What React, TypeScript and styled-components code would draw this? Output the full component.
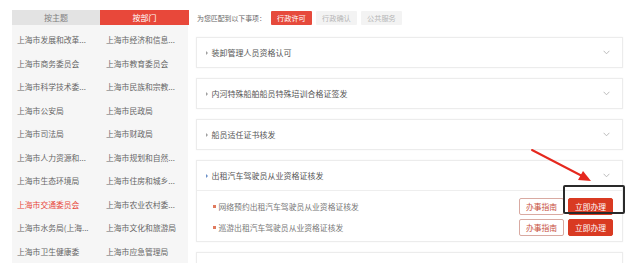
import React from "react";
import styled, { createGlobalStyle } from "styled-components";

const Global = createGlobalStyle`
  html, body { margin: 0; padding: 0; background: #ffffff; }
  body { font-family: "Noto Sans CJK SC", "Noto Sans", sans-serif; }
  * { box-sizing: border-box; }
`;

const Page = styled.div`
  position: relative;
  width: 640px;
  height: 263px;
  overflow: hidden;
  display: flex;
  gap: 7px;
  padding: 10px 0 0 12px;
`;

const Side = styled.div`
  width: 177px;
  display: flex;
  flex-direction: column;
`;

const Tabs = styled.div`
  display: flex;
  height: 26px;
`;

const Tab = styled.div<{ $active?: boolean }>`
  flex: ${(p) => (p.$active ? "0 0 89px" : "0 0 88px")};
  display: flex;
  align-items: center;
  justify-content: center;
  font-size: 8px;
  background: ${(p) => (p.$active ? "#e8483a" : "#e3e3e3")};
  color: ${(p) => (p.$active ? "#ffffff" : "#808080")};
`;

const DeptList = styled.div`
  width: 176px;
  flex: 1;
  background: #f6f6f6;
  display: grid;
  grid-template-columns: 89px 87px;
  grid-auto-rows: 23.5px;
  align-content: start;
  padding: 3px 0 0 5px;
`;

const Dept = styled.div<{ $active?: boolean }>`
  font-size: 7.8px;
  line-height: 23.5px;
  white-space: nowrap;
  color: ${(p) => (p.$active ? "#e8483a" : "#666666")};
`;

const Main = styled.div`
  width: 427px;
  display: flex;
  flex-direction: column;
`;

const Filter = styled.div`
  display: flex;
  align-items: center;
  height: 15px;
  margin-top: 1px;
  margin-bottom: 12px;
  gap: 4px;
`;

const FilterLabel = styled.span`
  font-size: 6.9px;
  color: #666666;
  margin-left: 1px;
  margin-right: 1px;
`;

const Tag = styled.span<{ $active?: boolean }>`
  height: 14px;
  width: 41px;
  display: inline-flex;
  align-items: center;
  justify-content: center;
  font-size: 7.2px;
  border-radius: 1px;
  background: ${(p) => (p.$active ? "#e64a3c" : "#f3f3f3")};
  color: ${(p) => (p.$active ? "#ffffff" : "#b5b5b5")};
`;

const Cards = styled.div`
  display: flex;
  flex-direction: column;
  gap: 10px;
`;

const Card = styled.div`
  border: 1px solid #ececec;
  background: #ffffff;
  box-shadow: 0 0 2px rgba(0, 0, 0, 0.04);
`;

const CardHead = styled.div<{ $open?: boolean }>`
  height: ${(p) => (p.$open ? "30px" : "29px")};
  display: flex;
  align-items: center;
  padding: 0 12px 0 9px;
  border-bottom: ${(p) => (p.$open ? "1px solid #eeeeee" : "none")};
`;

const Marker = styled.span<{ $blue?: boolean }>`
  width: 0;
  height: 0;
  border-top: 2px solid transparent;
  border-bottom: 2px solid transparent;
  border-left: 2.5px solid ${(p) => (p.$blue ? "#6a8fc8" : "#a0a0a0")};
  margin-right: 3.5px;
`;

const CardTitle = styled.span`
  flex: 1;
  font-size: 8px;
  color: #555555;
`;

const Chevron = styled.svg`
  width: 7px;
  height: 5px;
`;

const SubList = styled.div`
  padding: 5px 9px 3px 16px;
  display: flex;
  flex-direction: column;
`;

const SubRow = styled.div`
  height: 21px;
  display: flex;
  align-items: center;
`;

const Dot = styled.span`
  width: 2.5px;
  height: 2.5px;
  background: #e07a5e;
  margin-right: 3px;
`;

const SubText = styled.span`
  flex: 1;
  font-size: 7.8px;
  color: #777777;
`;

const Btn = styled.span<{ $primary?: boolean }>`
  width: 45px;
  height: 17px;
  display: inline-flex;
  align-items: center;
  justify-content: center;
  font-size: 7.8px;
  margin-left: 4px;
  border-radius: 2px;
  background: ${(p) => (p.$primary ? "#d93a22" : "#ffffff")};
  color: ${(p) => (p.$primary ? "#ffffff" : "#c8503e")};
  border: 1px solid ${(p) => (p.$primary ? "#d93a22" : "#d9aaa2")};
`;

const Highlight = styled.div`
  position: absolute;
  left: 563px;
  top: 185px;
  width: 62px;
  height: 29px;
  border: 2px solid #2a2a2a;
  border-radius: 2px;
`;

const Arrow = styled.svg`
  position: absolute;
  left: 528px;
  top: 146px;
  width: 66px;
  height: 38px;
`;

const left = [
  "上海市发展和改革...",
  "上海市商务委员会",
  "上海市科学技术委...",
  "上海市公安局",
  "上海市司法局",
  "上海市人力资源和...",
  "上海市生态环境局",
  "上海市交通委员会",
  "上海市水务局(上海...",
  "上海市卫生健康委",
];
const right = [
  "上海市经济和信息...",
  "上海市教育委员会",
  "上海市民族和宗教...",
  "上海市民政局",
  "上海市财政局",
  "上海市规划和自然...",
  "上海市住房和城乡...",
  "上海市农业农村委...",
  "上海市文化和旅游局",
  "上海市应急管理局",
];

const Down = () => (
  <Chevron viewBox="0 0 7 5">
    <path d="M0.6 0.8 L3.5 3.8 L6.4 0.8" fill="none" stroke="#b5b5b5" strokeWidth="0.9" />
  </Chevron>
);

export default function App() {
  return (
    <>
      <Global />
      <Page>
        <Side>
          <Tabs>
            <Tab>按主题</Tab>
            <Tab $active>按部门</Tab>
          </Tabs>
          <DeptList>
            {left.map((l, i) => (
              <React.Fragment key={i}>
                <Dept $active={i === 7}>{l}</Dept>
                <Dept>{right[i]}</Dept>
              </React.Fragment>
            ))}
          </DeptList>
        </Side>
        <Main>
          <Filter>
            <FilterLabel>为您匹配到以下事项：</FilterLabel>
            <Tag $active>行政许可</Tag>
            <Tag>行政确认</Tag>
            <Tag>公共服务</Tag>
          </Filter>
          <Cards>
            {["装卸管理人员资格认可", "内河特殊船舶船员特殊培训合格证签发", "船员适任证书核发"].map((t) => (
              <Card key={t}>
                <CardHead>
                  <Marker />
                  <CardTitle>{t}</CardTitle>
                  <Down />
                </CardHead>
              </Card>
            ))}
            <Card>
              <CardHead $open>
                <Marker $blue />
                <CardTitle>出租汽车驾驶员从业资格证核发</CardTitle>
                <Down />
              </CardHead>
              <SubList>
                {["网络预约出租汽车驾驶员从业资格证核发", "巡游出租汽车驾驶员从业资格证核发"].map((s) => (
                  <SubRow key={s}>
                    <Dot />
                    <SubText>{s}</SubText>
                    <Btn>办事指南</Btn>
                    <Btn $primary>立即办理</Btn>
                  </SubRow>
                ))}
              </SubList>
            </Card>
            <Card>
              <CardHead />
            </Card>
          </Cards>
        </Main>
        <Arrow viewBox="0 0 66 38">
          <line x1="4" y1="4" x2="56" y2="31" stroke="#e5281e" strokeWidth="2" strokeLinecap="round" />
          <polygon points="63,35 50,34 55,25" fill="#e5281e" />
        </Arrow>
        <Highlight />
      </Page>
    </>
  );
}
